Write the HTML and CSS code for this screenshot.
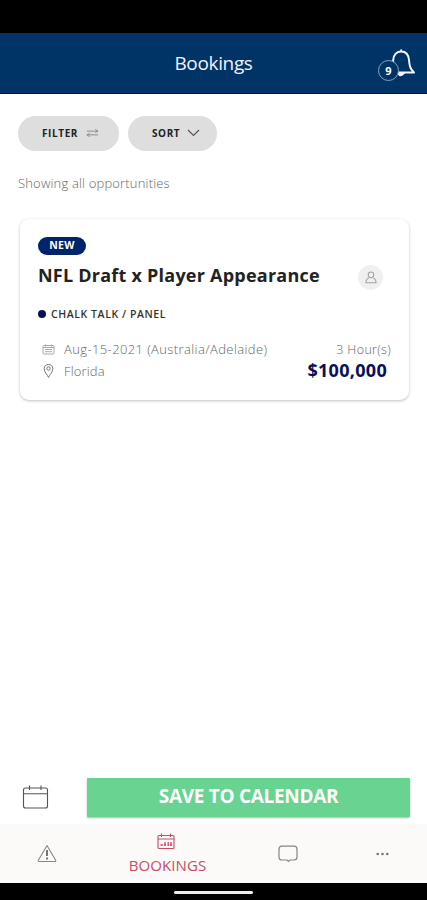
FILE: index.html
```html
<!DOCTYPE html>
<html lang="en">
<head>
<meta charset="utf-8">
<title>Bookings</title>
<link rel="stylesheet" href="styles.css">
</head>
<body>
<div class="status"></div>
<header class="header">
  <h1 class="header-title">Bookings</h1>
  <div class="bell">
    <svg width="30" height="32" viewBox="0 0 30 32" fill="none" stroke="#f3f5fb" stroke-width="2" stroke-linecap="round" stroke-linejoin="round"><path d="M4 25.5 C7 23 6.800 20 7.200 13 C7.600 7.500 11 4.500 15.200 4.500 C20 4.500 22.500 8 23 13 C23.500 19 24 22 28 25.500 Z M15.200 4.500 V3.300"/><path d="M12 26 Q14.500 30.500 18 26 Z" fill="#fff"/></svg>
    <span class="count">9</span>
  </div>
</header>
<main class="main">
  <div class="chips">
    <button class="chip filter"><span>FILTER</span><svg width="13" height="10" viewBox="0 0 14 10" fill="none" stroke="#888" stroke-width="1"><path d="M1 3H13M10 1L13 3L10 4.500M13 7H1M4 5.500L1 7L4 9"/></svg></button>
    <button class="chip sort"><span>SORT</span><svg width="13" height="8" viewBox="0 0 13 8" fill="none" stroke="#555" stroke-width="1.200"><path d="M1 1L6.500 6.500L12 1"/></svg></button>
  </div>
  <p class="showing">Showing all opportunities</p>
  <article class="card">
    <span class="tag">NEW</span>
    <div class="title-row">
      <h2 class="title">NFL Draft x Player Appearance</h2>
      <span class="avatar"><svg width="12" height="13" viewBox="0 0 12 13" fill="none" stroke="#a2a2a2" stroke-width="1.100"><circle cx="6" cy="3.800" r="2.800"/><path d="M3.800 7C1.800 7.500 1 9 1 11.800H11C11 9 10.200 7.500 8.200 7"/></svg></span>
    </div>
    <div class="kind"><i class="dot"></i><span>CHALK TALK / PANEL</span></div>
    <div class="row">
      <svg width="13" height="11" viewBox="0 0 13 11" fill="none" stroke="#a0a0a0" stroke-width=".9"><rect x="1" y="1.500" width="11" height="8.500" rx="1"/><path d="M1 3.500H12M3.500 .5V2.500M9.500 .5V2.500M3 5.500H10M3 7.700H10" /></svg>
      <span class="date">Aug-15-2021 (Australia/Adelaide)</span>
      <span class="hours">3 Hour(s)</span>
    </div>
    <div class="row place-row">
      <svg width="13" height="16" viewBox="0 0 13 16" fill="none" stroke="#777" stroke-width="1"><path d="M6.500 14.500C5.500 11.500 2.200 9.500 2.200 5.500C2.200 3 4 1.500 6.500 1.500S10.800 3 10.800 5.500C10.800 9.500 7.500 11.500 6.500 14.500Z"/><circle cx="6.500" cy="5.500" r="1.700"/></svg>
      <span class="place">Florida</span>
      <span class="price">$100,000</span>
    </div>
  </article>
</main>
<div class="save-row">
  <svg width="27" height="25" viewBox="0 0 27 25" fill="none" stroke="#555" stroke-width="1.100"><rect x="1.500" y="3" width="24" height="20" rx="2"/><path d="M1.500 8.700H25.500M7.500 .5V5M19 .5V5"/></svg>
  <button class="save"><span>SAVE TO CALENDAR</span></button>
</div>
<nav class="nav">
  <a class="tab"><svg width="20" height="19" viewBox="0 0 20 19" fill="none" stroke="#888" stroke-width="1.100" stroke-linejoin="round"><path d="M10 1.500L18.800 16.500Q18.800 17.500 18 17.500H2Q1.200 17.500 1.200 16.500Z"/><path d="M10 6V12M10 13.500V15.500" stroke="#555" stroke-width="1.600"/></svg></a>
  <a class="tab active"><svg width="18" height="17" viewBox="0 0 18 17" fill="none" stroke="#cb4b65" stroke-width="1.100"><rect x="1" y="2.500" width="16" height="13" rx="1"/><path d="M1 6H17M4.500 .5V4M13.500 .5V4"/><path d="M3.500 12H6M7 12H9M10.500 12H12M13 12H15M8 9V13M11.200 9V13M14 9V13" stroke-width="1.300"/></svg><span>BOOKINGS</span></a>
  <a class="tab"><svg width="20" height="18" viewBox="0 0 20 18" fill="none" stroke="#858585" stroke-width="1.200"><path d="M4 1.200H16Q19 1.200 19 4.200V12Q19 15 16 15H12L10.500 16.500L9 15H4Q1 15 1 12V4.200Q1 1.200 4 1.200Z"/></svg></a>
  <a class="tab more"><svg width="13" height="4" viewBox="0 0 13 4" fill="#777"><circle cx="1.700" cy="2" r="1.300"/><circle cx="6.500" cy="2" r="1.300"/><circle cx="11.300" cy="2" r="1.300"/></svg></a>
</nav>
<div class="system"><i class="handle"></i></div>
</body>
</html>
```
FILE: styles.css
```css
* { box-sizing: border-box; }
body { margin: 0; height: 900px; display: flex; flex-direction: column; overflow: hidden; background: #fff; font-family: "Open Sans", "Noto Sans", sans-serif; color: #222; }
h1, h2, p { margin: 0; }
button { border: 0; padding: 0; font-family: inherit; }
span { white-space: nowrap; }
svg { flex: none; display: block; }
.status { height: 33px; background: #000; flex: none; }
.header { height: 61px; flex: none; background: #003366; border-bottom: 1px solid #00104f; display: grid; grid-template-columns: 1fr auto 1fr; align-items: center; }
.header-title { grid-column: 2; font-size: 19px; line-height: 24px; font-weight: 400; color: #f1f3fa; letter-spacing: -.35px; }
.bell { justify-self: end; position: relative; margin-right: 11px; height: 32px; }
.count { position: absolute; left: -8px; top: 13px; width: 21px; height: 21px; border: 1px solid #8ea2be; border-radius: 50%; background: #003366; color: #fff; font-size: 11px; font-weight: 700; line-height: 19px; text-align: center; }
.main { flex: 1; padding: 22px 18px 0; }
.chips { display: flex; gap: 9px; }
.chip { height: 35px; border-radius: 18px; background: #dedede; display: flex; align-items: center; font-size: 10px; font-weight: 700; letter-spacing: .6px; line-height: 14px; padding-bottom: 2px; color: #222; }
.filter { width: 101px; gap: 8px; padding-left: 24px; }
.sort { width: 89px; gap: 7px; padding-left: 24px; }
.showing { margin-top: 22px; line-height: 20px; font-size: 13px; font-weight: 300; letter-spacing: .17px; color: #666; }
.card { margin: 26px 0 0 2px; width: 389px; height: 181px; padding: 18px 18px 0; border-radius: 9px; background: #fff; box-shadow: 0 1px 3px rgba(0, 0, 0, .25); }
.tag { display: block; width: 48px; height: 18px; border-radius: 10px; background: #00246a; color: #fff; font-size: 10.500px; font-weight: 700; line-height: 17px; text-align: center; letter-spacing: .3px; }
.title-row { display: flex; justify-content: space-between; align-items: center; height: 26px; margin: 9px 8px 0 0; }
.title { font-size: 18px; font-weight: 700; letter-spacing: .23px; white-space: nowrap; line-height: 24px; padding-bottom: 4px; }
.avatar { width: 25px; height: 25px; border-radius: 50%; background: #f0f0f0; display: flex; align-items: center; justify-content: center; }
.kind { margin-top: 15px; display: flex; align-items: center; height: 18px; gap: 5px; font-size: 10.500px; font-weight: 600; letter-spacing: .58px; color: #333; }
.dot { width: 8px; height: 8px; border-radius: 50%; background: #07105f; }
.row { display: flex; align-items: center; height: 21px; margin-top: 16px; padding-left: 4px; font-size: 13px; font-weight: 300; color: #666; }
.date, .place { margin-left: 9px; line-height: 18px; padding-bottom: 1px; }
.date { letter-spacing: .39px; }
.hours { margin-left: auto; font-size: 12.500px; letter-spacing: .35px; }
.place-row { margin-top: 0; }
.place { padding-bottom: 0; letter-spacing: .15px; }
.price { margin: 0 4px 0 auto; font-size: 18px; line-height: 20px; font-weight: 700; letter-spacing: .3px; padding-bottom: 1px; color: #090f5b; }
.save-row { flex: none; height: 46px; padding: 0 17px 7px 22px; display: flex; align-items: center; justify-content: space-between; }
.save { width: 323px; height: 39px; border-radius: 1px; background: #69d391; box-shadow: 0 1px 2px rgba(0, 0, 0, .3); color: #fff; font-size: 19px; font-weight: 700; letter-spacing: -.3px; line-height: 36px; padding-bottom: 3px; }
.nav { flex: none; height: 59px; background: #fbfaf8; display: grid; grid-template-columns: 93px 149px 92px 93px; align-items: center; }
.tab { display: flex; flex-direction: column; align-items: center; }
.more { padding-left: 3px; }
.active { color: #cb4b65; font-size: 15px; line-height: 20px; font-weight: 400; letter-spacing: .1px; gap: 5px; }
.active svg { margin-right: 3px; }
.system { flex: none; height: 17px; background: #000; display: flex; justify-content: center; padding-top: 8px; }
.handle { width: 79px; height: 3px; border-radius: 2px; background: #eee; }
```
